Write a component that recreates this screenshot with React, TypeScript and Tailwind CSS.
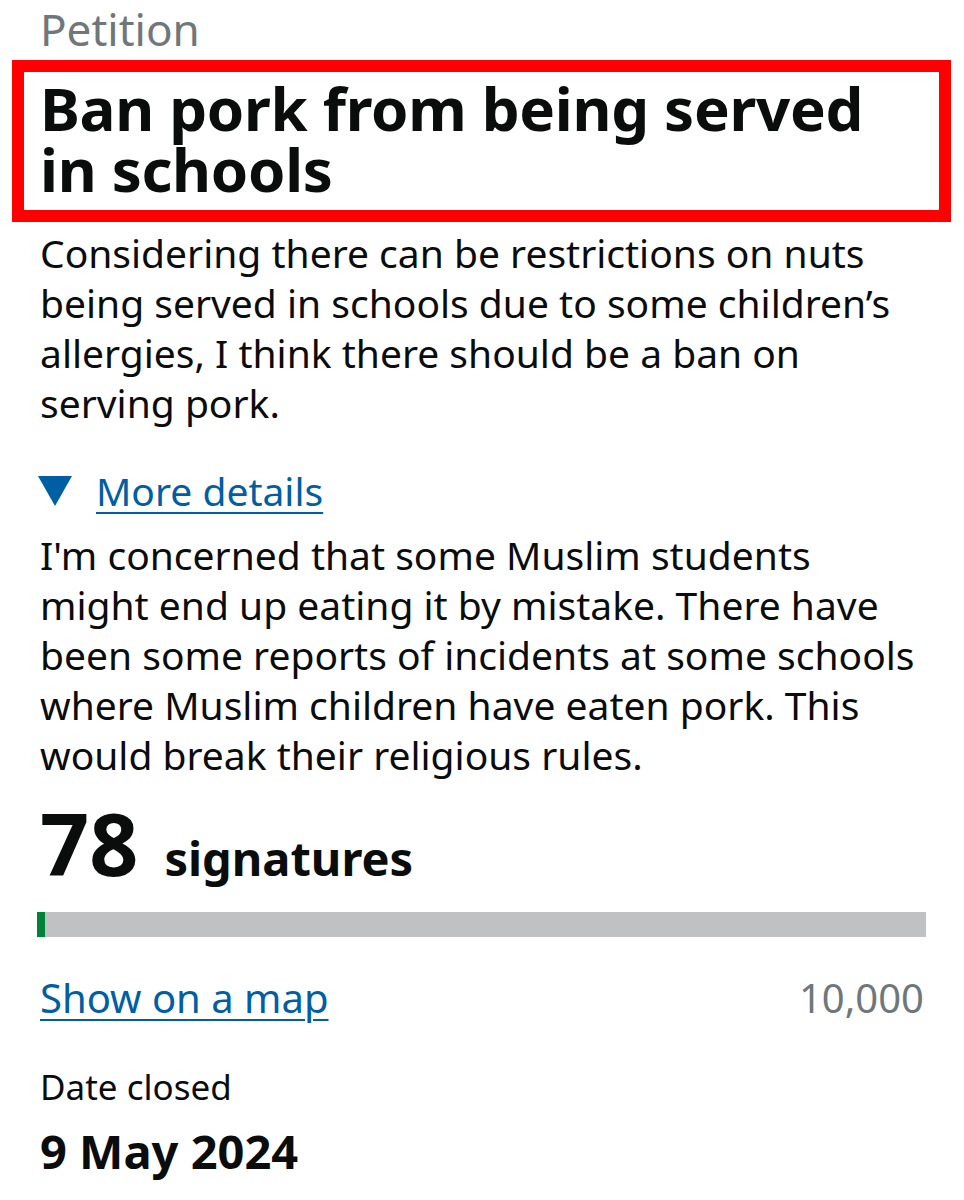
import React from 'react';

const signatures = 78;
const target = 10000;

const summary = [
  'Considering there can be restrictions on nuts',
  'being served in schools due to some children’s',
  'allergies, I think there should be a ban on',
  'serving pork.',
];

const details = [
  "I'm concerned that some Muslim students",
  'might end up eating it by mistake. There have',
  'been some reports of incidents at some schools',
  'where Muslim children have eaten pork. This',
  'would break their religious rules.',
];

const App: React.FC = () => {
  const pct = Math.max((signatures / target) * 100, 0.9);

  return (
    <div className="min-h-screen bg-white text-[#0b0c0c]" style={{ fontFamily: '"Noto Sans", "Open Sans", sans-serif' }}>
      <div className="px-[40px] pt-[5px] pb-10">
        {/* Caption */}
        <div className="text-[44px] leading-[48px] text-[#6f777b]">Petition</div>

        {/* Title, highlighted */}
        <div className="-ml-[28px] -mr-[27px] mt-[7px] border-[12px] border-[#ff0000] pl-[16px] pt-[6px] pb-[10px]">
          <h1 className="text-[60px] leading-[61px] font-bold tracking-[-0.3px]">
            <span className="block">Ban pork from being served</span>
            <span className="block">in schools</span>
          </h1>
        </div>

        {/* Summary */}
        <p className="mt-[6px] text-[39px] leading-[50px] whitespace-nowrap">
          {summary.map((line) => (
            <span key={line} className="block">{line}</span>
          ))}
        </p>

        {/* Details */}
        <div className="mt-[38px] flex items-center gap-[24px]">
          <svg width="34" height="30" viewBox="0 0 34 30" className="shrink-0 -ml-[2px]">
            <polygon points="0,0 34,0 17,30" fill="#005ea5" />
          </svg>
          <a href="#" className="text-[39px] leading-[50px] text-[#005ea5] underline decoration-[2px] underline-offset-[6px]">
            More details
          </a>
        </div>
        <p className="mt-[14px] text-[39px] leading-[50px] whitespace-nowrap">
          {details.map((line) => (
            <span key={line} className="block">{line}</span>
          ))}
        </p>

        {/* Signature count */}
        <div className="mt-[18px] flex items-baseline gap-[26px] font-bold">
          <span className="text-[86px] leading-[90px]">{signatures}</span>
          <span className="text-[47px] leading-[50px]">signatures</span>
        </div>

        {/* Progress */}
        <div className="mt-[24px] h-[25px] bg-[#bfc1c3] -ml-[3px] -mr-[2px]">
          <div className="h-full bg-[#00823b]" style={{ width: `${pct}%` }} />
        </div>

        <div className="mt-[36px] flex items-center justify-between">
          <a href="#" className="text-[40px] leading-[50px] text-[#005ea5] underline decoration-[2px] underline-offset-[6px]">
            Show on a map
          </a>
          <span className="text-[40px] leading-[50px] text-[#6f777b]">10,000</span>
        </div>

        {/* Closed date */}
        <div className="mt-[42px] text-[35px] leading-[44px]">Date closed</div>
        <div className="mt-[14px] text-[47px] leading-[56px] font-bold">9 May 2024</div>
      </div>
    </div>
  );
};

export default App;
